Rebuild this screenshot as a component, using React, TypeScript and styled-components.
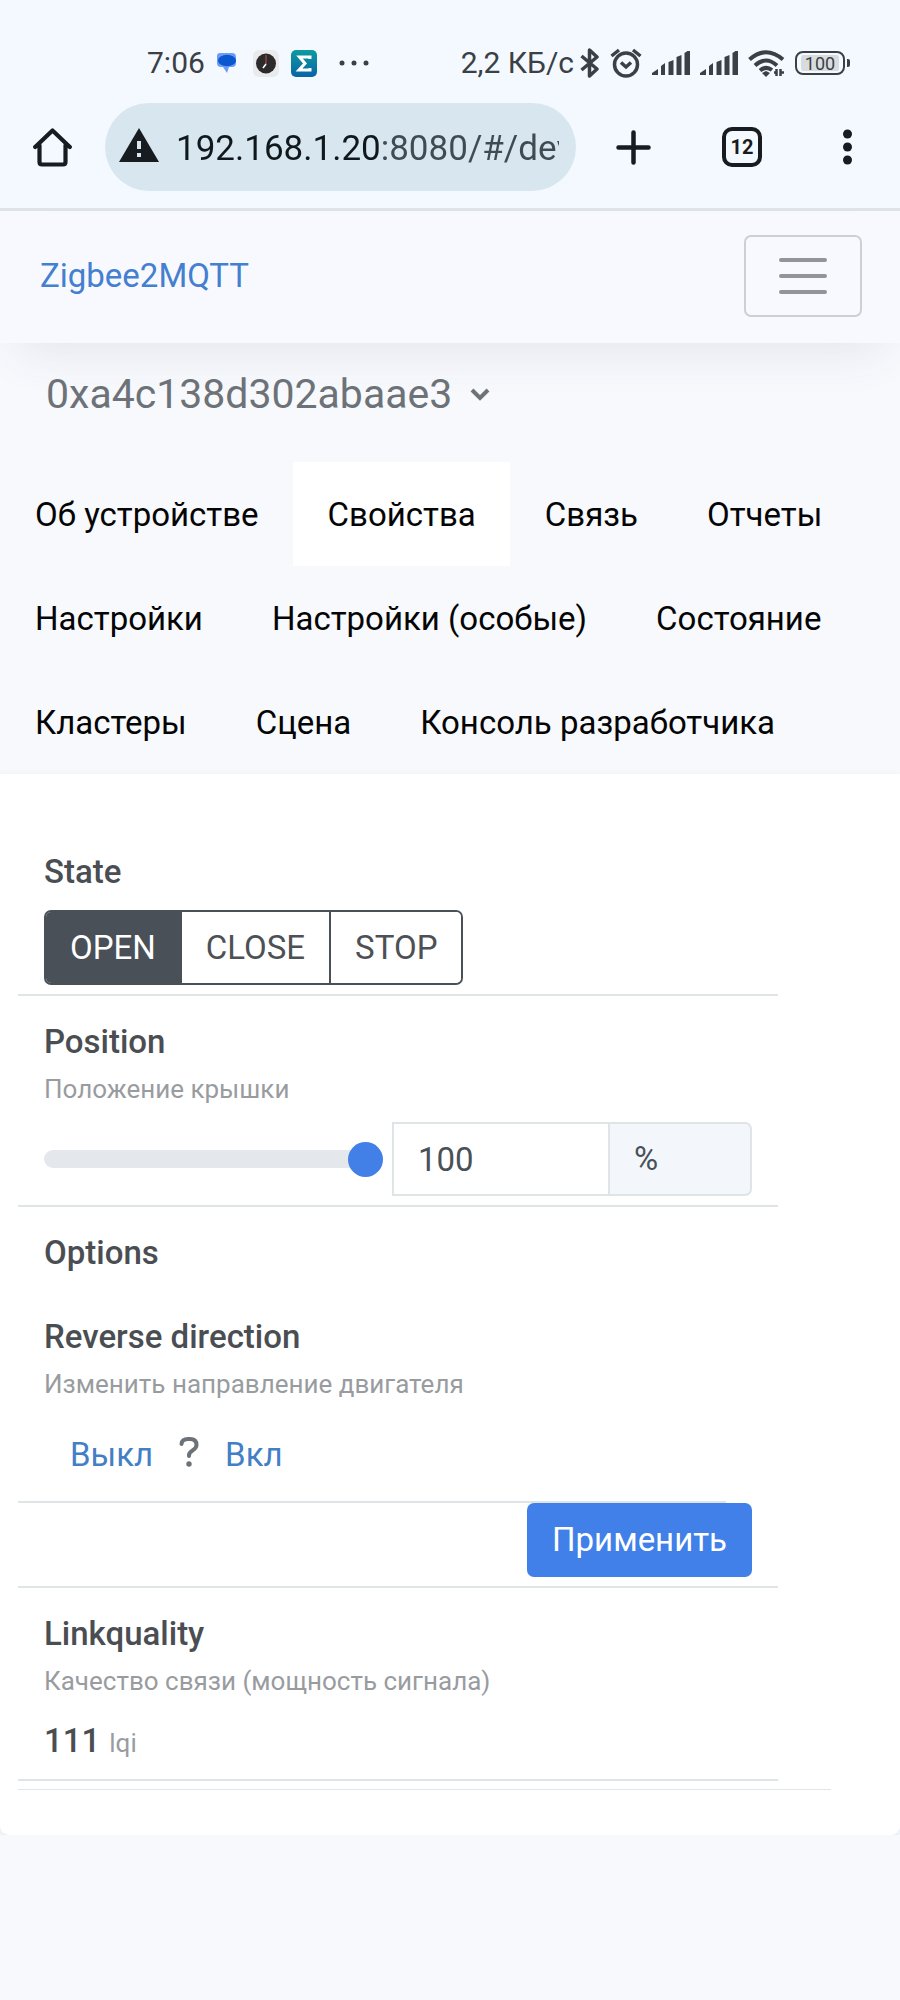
import React, { useState } from "react";
import styled, { createGlobalStyle } from "styled-components";

const GlobalStyle = createGlobalStyle`
  *, *::before, *::after { box-sizing: border-box; }
  body {
    margin: 0;
    background: #f7f9fd;
    color: #495057;
    font-family: Roboto, "Liberation Sans", sans-serif;
    font-size: 33px;
    line-height: 52px;
  }
  button, input { font: inherit; color: inherit; }
  button { cursor: pointer; background: none; border: 0; padding: 0; }
  a { text-decoration: none; }
  h1, h2, p { margin: 0; }
`;

const Chrome = styled.header`
  background: #f4f9ff;
  border-bottom: 3px solid #dde3e6;
`;

const StatusBar = styled.div`
  display: flex;
  align-items: center;
  justify-content: space-between;
  height: 103px;
  padding: 23px 50px 0 147px;
  color: #3b4044;
  font-size: 30px;
  svg { display: block; }
`;

const StatusGroup = styled.div<{ $gap: number }>`
  display: flex;
  align-items: center;
  gap: ${(p) => p.$gap}px;
`;

const BrowserBar = styled.div`
  display: flex;
  align-items: center;
  padding: 0 38px 17px 33px;
  color: #171c20;
  svg { display: block; }
`;

const Omnibox = styled.label`
  flex: 1;
  min-width: 0;
  display: flex;
  align-items: center;
  gap: 17px;
  height: 88px;
  margin: 0 40px 0 33px;
  padding: 0 17px 0 14px;
  border-radius: 44px;
  background: #d8e7ef;
`;

const AddressInput = styled.input`
  flex: 1;
  min-width: 0;
  border: 0;
  padding: 4px 0 0;
  outline: 0;
  font-size: 35px;
  color: transparent;
  background: linear-gradient(90deg, #10181d 203px, #3f4b52 203px);
  background-clip: text;
  -webkit-background-clip: text;
`;

const ChromeActions = styled.div`
  display: flex;
  align-items: center;
  gap: 71px;
`;

const IconButton = styled.button`
  display: block;
`;

const TabCount = styled.button`
  width: 40px;
  height: 40px;
  border: 4px solid currentColor;
  border-radius: 10px;
  font-size: 20px;
  font-weight: 700;
  line-height: 32px;
`;

const Navbar = styled.nav`
  display: flex;
  align-items: center;
  justify-content: space-between;
  padding: 24px 38px 26px 40px;
  background: #f8f9fe;
  box-shadow: 0 24px 48px -16px rgba(60, 75, 85, 0.11);
`;

const Brand = styled.a`
  color: #447fd0;
`;

const Toggler = styled.button`
  display: grid;
  place-items: center;
  width: 118px;
  height: 82px;
  border: 2px solid #cdd0d3;
  border-radius: 7px;
`;

const DeviceButton = styled.button`
  display: flex;
  align-items: center;
  gap: 18px;
  margin: 25px 0 42px 46px;
  color: #6c7278;
  font-size: 41px;
`;

const Tabs = styled.nav`
  display: flex;
  flex-wrap: wrap;
`;

const Tab = styled.a<{ $active?: boolean }>`
  padding: 27px 34px 25px 35px;
  color: #050505;
  background: ${(p) => (p.$active ? "#fff" : "transparent")};
`;

const Card = styled.main`
  padding: 52px 69px 45px 18px;
  background: #fff;
  border-radius: 0 0 9px 9px;
  box-shadow: 0 3px 8px rgba(60, 80, 90, 0.1);
`;

const Features = styled.div`
  padding: 0 53px 8px 0;
  border-bottom: 1px solid #dfe6e8;
`;

const Feature = styled.section`
  padding: 20px 26px 9px;
  border-bottom: 2px solid #dfe4e6;
`;

const NestedFeature = styled(Feature)`
  margin: 12px 26px 0 -26px;
`;

const Heading = styled.h2`
  font-size: 33px;
  font-weight: 500;
  color: #4a4e53;
`;

const Description = styled.p`
  margin-bottom: 12px;
  color: #999c9f;
  font-size: 26px;
  line-height: 42px;
`;

const ButtonGroup = styled.div`
  display: inline-flex;
  margin-top: 12px;
  vertical-align: top;
  border: 2px solid #495057;
  border-radius: 7px;
  overflow: hidden;
`;

const Choice = styled.button<{ $active: boolean }>`
  height: 71px;
  padding: 0 24px;
  color: ${(p) => (p.$active ? "#fff" : "#4d5054")};
  background: ${(p) => (p.$active ? "#495057" : "#fff")};
  & + & { border-left: 2px solid #495057; }
`;

const RangeRow = styled.div`
  display: grid;
  grid-template-columns: minmax(0, 348fr) minmax(0, 218fr) minmax(0, 142fr);
  align-items: center;
`;

const Slider = styled.input`
  width: calc(100% - 9px);
  height: 35px;
  margin: 0;
  appearance: none;
  background: transparent;
  &::-webkit-slider-runnable-track {
    height: 18px;
    border-radius: 9px;
    background: #e4e7eb;
  }
  &::-webkit-slider-thumb {
    appearance: none;
    width: 35px;
    height: 35px;
    margin-top: -8px;
    border-radius: 50%;
    background: #4280e8;
  }
`;

const NumberInput = styled.input`
  width: 100%;
  height: 74px;
  padding: 0 24px;
  border: 2px solid #dfe4e6;
  background: #fff;
`;

const Unit = styled.span`
  height: 74px;
  padding: 9px 24px;
  border: 2px solid #dfe4e6;
  border-left: 0;
  border-radius: 0 7px 7px 0;
  background: #f3f7fb;
`;

const Toggle = styled.div`
  display: flex;
  align-items: center;
  gap: 26px;
  height: 75px;
  padding: 0 26px;
  color: #6c7278;
`;

const LinkButton = styled.button`
  color: #447fc6;
`;

const Actions = styled.div`
  display: flex;
  justify-content: flex-end;
`;

const PrimaryButton = styled.button`
  height: 74px;
  padding: 0 25px;
  border-radius: 7px;
  color: #fff;
  background: #4080e8;
`;

const Reading = styled.p`
  line-height: 53px;
  strong { font-weight: 500; color: #4a4e53; }
  small { margin-left: 9px; font-size: 26px; color: #999c9f; }
`;

const ChatIcon = () => (
  <svg width="24" height="20" viewBox="0 0 24 20">
    <path d="M3 0h12a4 4 0 0 1 4 4v6a4 4 0 0 1-4 4h-3l-2 6-4-6H4a4 4 0 0 1-4-4V3a3 3 0 0 1 3-3z" fill="#6d9cf8" />
    <ellipse cx="10" cy="7.500" rx="9" ry="5.800" fill="#0b57d0" />
  </svg>
);

const ClockIcon = () => (
  <svg width="26" height="27" viewBox="0 0 26 27">
    <rect width="26" height="27" rx="6" fill="#e9eaec" />
    <circle cx="13" cy="13.500" r="10" fill="#2c2a2b" />
    <path d="M13 14V5" stroke="#c2514d" strokeWidth="1" />
    <path d="M13 14l-3 4" stroke="#fff" strokeWidth="1.500" />
  </svg>
);

const SigmaIcon = () => (
  <svg width="26" height="27" viewBox="0 0 26 27">
    <defs>
      <linearGradient id="sigma" x1="0" y1="0" x2="0" y2="1">
        <stop offset="0" stopColor="#0f9b9f" />
        <stop offset="1" stopColor="#0863a8" />
      </linearGradient>
    </defs>
    <rect width="26" height="27" rx="5" fill="url(#sigma)" />
    <path d="M19 9V7H8.500l5.500 6.500L8 20h11v-2" fill="none" stroke="#fff" strokeWidth="3" />
  </svg>
);

const DotsIcon = () => (
  <svg width="40" height="6" viewBox="-10 0 40 6" fill="currentColor">
    <circle cx="3" cy="3" r="2.500" />
    <circle cx="15" cy="3" r="2.500" />
    <circle cx="27" cy="3" r="2.500" />
  </svg>
);

const BluetoothIcon = () => (
  <svg width="20" height="30" viewBox="0 0 20 30" fill="none" stroke="currentColor" strokeWidth="3.500" strokeLinejoin="round">
    <path d="M1.500 8L17 21l-7.500 7V2L17 9 1.500 22" />
  </svg>
);

const AlarmIcon = () => (
  <svg width="32" height="30" viewBox="0 0 32 30" fill="none" stroke="currentColor" strokeWidth="3.500">
    <circle cx="16" cy="16.500" r="11.500" />
    <path d="M1.500 8L9 2M30.500 8L23 2M11 14.500l5 4.500 5-4.500" />
  </svg>
);

const SignalIcon = () => (
  <svg width="38" height="24" viewBox="0 0 38 24" fill="currentColor">
    <path d="M0 24v-2l6-4v6zM9 24v-9l4-3v12zM16.500 24V11l5-2v15zM24.500 24V6l5-2v20zM32.500 24V2l3-2h2.500v24z" />
  </svg>
);

const WifiIcon = () => (
  <svg width="37" height="28" viewBox="0 0 37 28" fill="none" stroke="currentColor" strokeWidth="4">
    <path d="M1.500 10.500Q18 -4 35 10.500M7 16.500Q18 6.500 29 16.500M12 21.500Q18 16.500 24 21" />
    <path d="M14 24l4-2 4 2-4 4z" fill="currentColor" stroke="none" />
    <path d="M28.500 20v7M32.500 20v7M26 23.500h3M32 23.500h4" strokeWidth="2.500" />
  </svg>
);

const Battery = styled.div`
  display: flex;
  align-items: center;
  span {
    width: 50px;
    height: 24px;
    padding: 2px 4px;
    border: 2px solid currentColor;
    border-radius: 8px;
    background: #d9dcde content-box;
    font-size: 18px;
    line-height: 17px;
    text-align: center;
  }
  &::after {
    content: "";
    width: 3px;
    height: 8px;
    margin-left: 2px;
    border-radius: 0 2px 2px 0;
    background: currentColor;
  }
`;

const HomeIcon = () => (
  <svg width="39" height="39" viewBox="0 0 39 39" fill="none" stroke="currentColor" strokeWidth="4.200" strokeLinecap="round" strokeLinejoin="round">
    <path d="M2.200 19L19.500 2.500 36.800 19M6.500 17v17q0 2.500 2.500 2.500h21q2.500 0 2.500-2.500V17" />
  </svg>
);

const WarningIcon = () => (
  <svg width="40" height="38" viewBox="0 0 40 38">
    <path d="M20 0l20 34H0z" fill="#171c20" />
    <path d="M20 13v8M20 25v4" stroke="#d8e7ef" strokeWidth="4" />
  </svg>
);

const PlusIcon = () => (
  <svg width="35" height="35" viewBox="0 0 35 35" stroke="currentColor" strokeWidth="4.500" strokeLinecap="round">
    <path d="M17.500 2.500v30M2.500 17.500h30" />
  </svg>
);

const KebabIcon = () => (
  <svg width="29" height="36" viewBox="0 0 29 36" fill="currentColor">
    <circle cx="14.500" cy="5" r="4.500" />
    <circle cx="14.500" cy="18" r="4.500" />
    <circle cx="14.500" cy="31" r="4.500" />
  </svg>
);

const MenuIcon = () => (
  <svg width="48" height="38" viewBox="0 0 48 38" stroke="#919499" strokeWidth="4" strokeLinecap="round">
    <path d="M2 3h44M2 19h44M2 35h44" />
  </svg>
);

const ChevronIcon = () => (
  <svg width="20" height="13" viewBox="0 0 20 13" fill="none" stroke="currentColor" strokeWidth="4">
    <path d="M2 2l8 8 8-8" />
  </svg>
);

const UnknownIcon = () => (
  <svg width="20" height="38" viewBox="0 0 20 38" fill="none" stroke="currentColor" strokeWidth="4" strokeLinecap="round">
    <path d="M2.500 8Q3 3 9 3h2q6.500 0 6.500 6 0 3-4 5.500t-3.500 5.500" />
    <circle cx="10" cy="28" r="2.700" fill="currentColor" stroke="none" />
  </svg>
);

const TABS = [
  "Об устройстве",
  "Свойства",
  "Связь",
  "Отчеты",
  "Настройки",
  "Настройки (особые)",
  "Состояние",
  "Кластеры",
  "Сцена",
  "Консоль разработчика",
];

const STATES = ["OPEN", "CLOSE", "STOP"];

export default function App() {
  const [state, setState] = useState("OPEN");
  const [position, setPosition] = useState(100);
  const [address, setAddress] = useState("192.168.1.20:8080/#/device");

  return (
    <>
      <GlobalStyle />
      <Chrome>
        <StatusBar>
          <StatusGroup $gap={12}>
            <span>7:06</span>
            <ChatIcon />
            <ClockIcon />
            <SigmaIcon />
            <DotsIcon />
          </StatusGroup>
          <StatusGroup $gap={10}>
            <StatusGroup $gap={6}>
              <span>2,2 КБ/с</span>
              <BluetoothIcon />
            </StatusGroup>
            <AlarmIcon />
            <SignalIcon />
            <SignalIcon />
            <WifiIcon />
            <Battery><span>100</span></Battery>
          </StatusGroup>
        </StatusBar>
        <BrowserBar>
          <IconButton aria-label="Home"><HomeIcon /></IconButton>
          <Omnibox>
            <WarningIcon />
            <AddressInput aria-label="Address" value={address} onChange={(e) => setAddress(e.target.value)} />
          </Omnibox>
          <ChromeActions>
            <IconButton aria-label="New tab"><PlusIcon /></IconButton>
            <TabCount>12</TabCount>
            <IconButton aria-label="More"><KebabIcon /></IconButton>
          </ChromeActions>
        </BrowserBar>
      </Chrome>

      <Navbar>
        <Brand href="#/">Zigbee2MQTT</Brand>
        <Toggler aria-label="Menu"><MenuIcon /></Toggler>
      </Navbar>

      <DeviceButton>
        0xa4c138d302abaae3
        <ChevronIcon />
      </DeviceButton>

      <Tabs>
        {TABS.map((name) => (
          <Tab key={name} href="#/device" $active={name === "Свойства"}>{name}</Tab>
        ))}
      </Tabs>

      <Card>
        <Features>
          <Feature>
            <Heading>State</Heading>
            <ButtonGroup>
              {STATES.map((s) => (
                <Choice key={s} $active={s === state} onClick={() => setState(s)}>{s}</Choice>
              ))}
            </ButtonGroup>
          </Feature>

          <Feature>
            <Heading>Position</Heading>
            <Description>Положение крышки</Description>
            <RangeRow>
              <Slider
                type="range"
                aria-label="Position"
                min={0}
                max={100}
                value={position}
                onChange={(e) => setPosition(Number(e.target.value))}
              />
              <NumberInput
                inputMode="numeric"
                aria-label="Position value"
                value={position}
                onChange={(e) => setPosition(Number(e.target.value) || 0)}
              />
              <Unit>%</Unit>
            </RangeRow>
          </Feature>

          <Feature>
            <Heading>Options</Heading>
            <NestedFeature>
              <Heading>Reverse direction</Heading>
              <Description>Изменить направление двигателя</Description>
              <Toggle>
                <LinkButton>Выкл</LinkButton>
                <UnknownIcon />
                <LinkButton>Вкл</LinkButton>
              </Toggle>
            </NestedFeature>
            <Actions>
              <PrimaryButton>Применить</PrimaryButton>
            </Actions>
          </Feature>

          <Feature>
            <Heading>Linkquality</Heading>
            <Description>Качество связи (мощность сигнала)</Description>
            <Reading><strong>111</strong><small>lqi</small></Reading>
          </Feature>
        </Features>
      </Card>
    </>
  );
}
